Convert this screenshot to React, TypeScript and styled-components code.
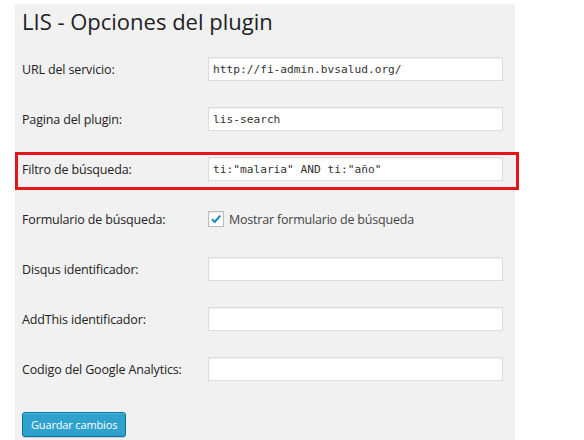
import React from "react";
import styled, { createGlobalStyle } from "styled-components";

const Global = createGlobalStyle`
  html, body { margin: 0; padding: 0; background: #fff; }
  body { font-family: "Open Sans", "Noto Sans", sans-serif; color: #222; }
`;

const Panel = styled.div`
  margin: 4px 0 0 15px;
  width: 500px;
  min-height: 436px;
  background: #f1f1f1;
  padding-left: 7px;
  box-sizing: border-box;
`;

const Title = styled.h2`
  margin: 0;
  padding: 3px 0 8px 0;
  font-size: 22px;
  line-height: 29px;
  font-weight: 400;
  color: #222;
`;

const Row = styled.div<{ $highlight?: boolean }>`
  position: relative;
  display: grid;
  grid-template-columns: 186px 295px;
  align-items: center;
  height: 50px;
  &::after {
    content: "";
    display: ${(p) => (p.$highlight ? "block" : "none")};
    position: absolute;
    top: 8px;
    bottom: 4px;
    left: -7px;
    right: -4px;
    border: 3px solid #e8141c;
    pointer-events: none;
  }
`;

const Label = styled.label`
  font-size: 12.5px;
  letter-spacing: -0.15px;
  color: #222;
`;

const Input = styled.input`
  box-sizing: border-box;
  width: 295px;
  height: 24px;
  margin: 0;
  padding: 0 4px;
  border: 1px solid #ddd;
  box-shadow: inset 0 1px 2px rgba(0, 0, 0, 0.07);
  background: #fff;
  font-family: "DejaVu Sans Mono", "Liberation Mono", monospace;
  font-size: 11.2px;
  color: #333;
  outline: none;
`;

const CheckWrap = styled.label`
  display: flex;
  align-items: center;
  gap: 5px;
  font-size: 12.5px;
  letter-spacing: -0.2px;
  color: #444;
`;

const Box = styled.span`
  box-sizing: border-box;
  width: 16px;
  height: 16px;
  border: 1px solid #bbb;
  background: #fff;
  box-shadow: inset 0 1px 2px rgba(0, 0, 0, 0.1);
  display: flex;
  align-items: center;
  justify-content: center;
`;

const ButtonRow = styled.div`
  padding-top: 18px;
`;

const Button = styled.button`
  box-sizing: border-box;
  height: 25px;
  padding: 0 8px;
  border: 1px solid #0074a2;
  border-radius: 3px;
  background: #2ea2cc;
  box-shadow: inset 0 1px 0 rgba(120, 200, 230, 0.5), 0 1px 0 rgba(0, 0, 0, 0.15);
  color: #fff;
  font-family: "Open Sans", "Noto Sans", sans-serif;
  font-size: 11px;
  letter-spacing: -0.15px;
  cursor: pointer;
`;

const fields = [
  { label: "URL del servicio:", value: "http://fi-admin.bvsalud.org/" },
  { label: "Pagina del plugin:", value: "lis-search" },
  { label: "Filtro de búsqueda:", value: 'ti:"malaria" AND ti:"año"', highlight: true },
];

const rest = [
  { label: "Disqus identificador:", value: "" },
  { label: "AddThis identificador:", value: "" },
  { label: "Codigo del Google Analytics:", value: "" },
];

export default function App() {
  return (
    <>
      <Global />
      <Panel>
        <Title>LIS - Opciones del plugin</Title>
        {fields.map((f) => (
          <Row key={f.label} $highlight={f.highlight}>
            <Label>{f.label}</Label>
            <Input defaultValue={f.value} readOnly />
          </Row>
        ))}
        <Row>
          <Label>Formulario de búsqueda:</Label>
          <CheckWrap>
            <Box>
              <svg width="12" height="12" viewBox="0 0 12 12">
                <path d="M2 6.2 L4.8 9 L10.2 2.6" fill="none" stroke="#1e8cbe" strokeWidth="2.2" />
              </svg>
            </Box>
            Mostrar formulario de búsqueda
          </CheckWrap>
        </Row>
        {rest.map((f) => (
          <Row key={f.label}>
            <Label>{f.label}</Label>
            <Input defaultValue={f.value} readOnly />
          </Row>
        ))}
        <ButtonRow>
          <Button>Guardar cambios</Button>
        </ButtonRow>
      </Panel>
    </>
  );
}
